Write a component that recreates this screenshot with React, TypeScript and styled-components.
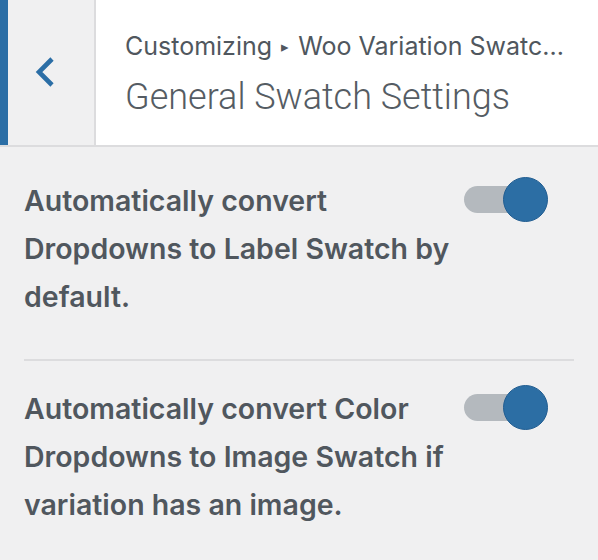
import React from "react";
import styled, { createGlobalStyle } from "styled-components";

const Global = createGlobalStyle`
  html, body { margin: 0; padding: 0; background: #f0f0f1; }
  body { font-family: Inter, "Noto Sans", sans-serif; -webkit-font-smoothing: antialiased; }
  * { box-sizing: border-box; }
`;

const Page = styled.div`
  width: 598px;
  height: 560px;
  overflow: hidden;
  background: #f0f0f1;
  display: flex;
  flex-direction: column;
`;

const Header = styled.header`
  display: flex;
  height: 147px;
  background: #ffffff;
  border-bottom: 2px solid #dcdcde;
  flex-shrink: 0;
`;

const AccentBar = styled.div`
  width: 8px;
  background: #2b6ea6;
`;

const BackButton = styled.button`
  width: 88px;
  border: none;
  border-right: 2px solid #dcdcde;
  background: #f0f0f1;
  display: flex;
  align-items: center;
  justify-content: center;
  padding: 0 12px 2px 0;
  cursor: pointer;
`;

const TitleBlock = styled.div`
  flex: 1;
  min-width: 0;
  padding: 31px 20px 0 29px;
  display: flex;
  flex-direction: column;
  gap: 12px;
`;

const Breadcrumb = styled.div`
  font-size: 25px;
  line-height: 30px;
  color: #50575e;
  font-weight: 400;
  white-space: nowrap;
`;

const Arrow = styled.span`
  font-size: 15px;
  vertical-align: 3px;
  margin: 0 2px;
`;

const Title = styled.h1`
  margin: 0;
  font-family: Roboto, Inter, sans-serif;
  font-size: 36px;
  line-height: 46px;
  font-weight: 300;
  color: #555c63;
  white-space: nowrap;
`;

const Content = styled.main`
  padding: 30px 24px 0 24px;
  display: flex;
  flex-direction: column;
`;

const Item = styled.div<{ $last?: boolean }>`
  display: flex;
  align-items: flex-start;
  gap: 10px;
  padding-bottom: ${(p) => (p.$last ? "0" : "38px")};
  margin-bottom: ${(p) => (p.$last ? "0" : "24px")};
  border-bottom: ${(p) => (p.$last ? "none" : "2px solid #dcdcde")};
`;

const Label = styled.div`
  flex: 1;
  font-size: 28.5px;
  line-height: 48px;
  font-weight: 600;
  color: #50575e;
`;

const Switch = styled.div`
  position: relative;
  width: 84px;
  height: 45px;
  margin: 0 26px 0 0;
  flex-shrink: 0;
`;

const Track = styled.div`
  margin-top: 9px;
  width: 72px;
  height: 27px;
  border-radius: 14px;
  background: #b4b9be;
`;

const Knob = styled.div`
  position: absolute;
  right: 0;
  top: 0;
  width: 45px;
  height: 45px;
  border-radius: 50%;
  background: #2c6ea4;
  border: 1px solid #215d91;
`;

const Toggle = () => (
  <Switch>
    <Track />
    <Knob />
  </Switch>
);

export default function App() {
  return (
    <Page>
      <Global />
      <Header>
        <AccentBar />
        <BackButton aria-label="Back">
          <svg width="20" height="30" viewBox="0 0 20 30">
            <polyline
              points="17,2 4,15 17,28"
              fill="none"
              stroke="#2b6ea6"
              strokeWidth="4.6"
              strokeLinecap="butt"
              strokeLinejoin="miter"
            />
          </svg>
        </BackButton>
        <TitleBlock>
          <Breadcrumb>
            Customizing <Arrow>▸</Arrow> Woo Variation Swatc...
          </Breadcrumb>
          <Title>General Swatch Settings</Title>
        </TitleBlock>
      </Header>
      <Content>
        <Item>
          <Label>Automatically convert Dropdowns to Label Swatch by default.</Label>
          <Toggle />
        </Item>
        <Item $last>
          <Label>Automatically convert Color Dropdowns to Image Swatch if variation has an image.</Label>
          <Toggle />
        </Item>
      </Content>
    </Page>
  );
}
